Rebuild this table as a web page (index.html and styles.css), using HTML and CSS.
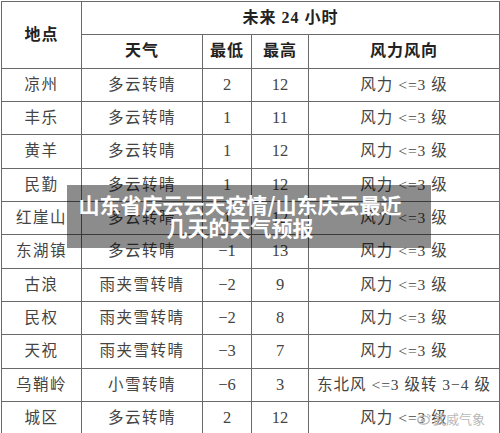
FILE: index.html
```html
<!DOCTYPE html>
<html lang="zh">
<head>
<meta charset="utf-8">
<title>山东省庆云云天疫情</title>
<link rel="stylesheet" href="styles.css">
</head>
<body>
<div class="page">
  <table class="weather">
    <colgroup>
      <col class="c-place"><col class="c-wx"><col class="c-lo"><col class="c-hi"><col class="c-wind">
    </colgroup>
    <thead>
      <tr>
        <th rowspan="2" class="hd">地点</th>
        <th colspan="4" class="hd">未来 24 小时</th>
      </tr>
      <tr>
        <th class="hd">天气</th>
        <th class="hd">最低</th>
        <th class="hd">最高</th>
        <th class="hd">风力风向</th>
      </tr>
    </thead>
    <tbody>
      <tr><td>凉州</td><td class="wx">多云转晴</td><td class="num">2</td><td class="num">12</td><td class="wind">风力 &lt;=3 级</td></tr>
      <tr><td>丰乐</td><td class="wx">多云转晴</td><td class="num">1</td><td class="num">11</td><td class="wind">风力 &lt;=3 级</td></tr>
      <tr><td>黄羊</td><td class="wx">多云转晴</td><td class="num">1</td><td class="num">12</td><td class="wind">风力 &lt;=3 级</td></tr>
      <tr><td>民勤</td><td class="wx">多云转晴</td><td class="num">1</td><td class="num">12</td><td class="wind">风力 &lt;=3 级</td></tr>
      <tr><td>红崖山</td><td class="wx">多云转晴</td><td class="num">1</td><td class="num">12</td><td class="wind">风力 &lt;=3 级</td></tr>
      <tr><td>东湖镇</td><td class="wx">多云转晴</td><td class="num">−1</td><td class="num">13</td><td class="wind">风力 &lt;=3 级</td></tr>
      <tr><td>古浪</td><td class="wx">雨夹雪转晴</td><td class="num">−2</td><td class="num">9</td><td class="wind">风力 &lt;=3 级</td></tr>
      <tr><td>民权</td><td class="wx">雨夹雪转晴</td><td class="num">−2</td><td class="num">8</td><td class="wind">风力 &lt;=3 级</td></tr>
      <tr><td>天祝</td><td class="wx">雨夹雪转晴</td><td class="num">−3</td><td class="num">7</td><td class="wind">风力 &lt;=3 级</td></tr>
      <tr><td>乌鞘岭</td><td class="wx">小雪转晴</td><td class="num">−6</td><td class="num">3</td><td class="wind">东北风 &lt;=3 级转 3−4 级</td></tr>
      <tr><td>城区</td><td class="wx">多云转晴</td><td class="num">2</td><td class="num">12</td><td class="wind">风力 &lt;=3 级</td></tr>
    </tbody>
  </table>

  <div class="caption">山东省庆云云天疫情/山东庆云最近<br>几天的天气预报</div>

  <div class="watermark">
    <svg class="wm-icon" width="14" height="12" viewBox="0 0 14 12">
      <ellipse cx="6.5" cy="7" rx="5.8" ry="4.2" fill="none" stroke="#b8b8b8" stroke-width="1.3"/>
      <ellipse cx="6" cy="7.4" rx="2.2" ry="1.7" fill="#b8b8b8"/>
      <path d="M10 1.5 a3 3 0 0 1 3 3" fill="none" stroke="#b8b8b8" stroke-width="1.2"/>
    </svg>
    <span>武威气象</span>
  </div>
</div>
</body>
</html>
```
FILE: styles.css
```css
html, body {
  margin: 0;
  padding: 0;
  background: #ffffff;
}

.page {
  position: relative;
  width: 500px;
  height: 433px;
  overflow: hidden;
}

.weather {
  margin: 1px 0 0 1px;
  width: 498px;
  table-layout: fixed;
  border-collapse: collapse;
  font-family: "Liberation Serif", "Noto Sans CJK SC", serif;
  color: #444444;
  font-size: 15.5px;
}

.c-place { width: 80px; }
.c-wx { width: 121px; }
.c-lo { width: 49px; }
.c-hi { width: 57px; }
.c-wind { width: 191px; }

.weather tr {
  height: 33.33px;
}

.weather th,
.weather td {
  border: 1px solid #6a6a6a;
  padding: 0;
  text-align: center;
  vertical-align: middle;
  line-height: 20px;
  font-weight: normal;
}

.weather td {
  letter-spacing: 1.5px;
}

.weather td.num {
  letter-spacing: 0;
  font-size: 16.5px;
}

.weather .hd {
  font-weight: bold;
  color: #222;
  font-size: 16px;
  letter-spacing: 1px;
}

.weather .wind {
  letter-spacing: 1px;
}

.caption {
  position: absolute;
  left: 67px;
  top: 185px;
  width: 364px;
  height: 63px;
  box-sizing: border-box;
  padding: 8px 29px 0 11px;
  background: rgba(0, 0, 0, 0.45);
  color: #ffffff;
  font-family: "Noto Sans CJK SC", "Noto Sans", sans-serif;
  font-weight: bold;
  font-size: 21px;
  line-height: 23px;
  text-align: center;
  white-space: nowrap;
}

.watermark {
  position: absolute;
  left: 417px;
  top: 409px;
  display: flex;
  align-items: center;
  gap: 2px;
  font-family: "Noto Sans CJK SC", sans-serif;
  font-size: 13px;
  color: rgba(170, 170, 170, 0.85);
  text-shadow: 0 0 1px #fff;
}

.wm-icon {
  display: block;
}
```
